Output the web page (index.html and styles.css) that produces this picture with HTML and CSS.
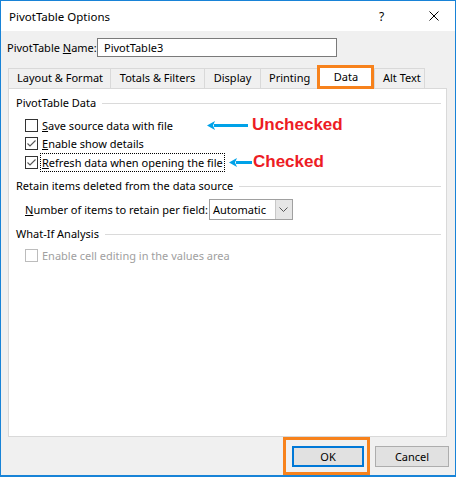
FILE: index.html
```html
<!DOCTYPE html>
<html>
<head>
<meta charset="utf-8">
<link rel="stylesheet" href="styles.css">
</head>
<body>
<div class="dialog">
  <div class="titlebar">
    <span class="title">PivotTable Options</span>
    <span class="help">?</span>
    <svg class="close" width="10" height="10" viewBox="0 0 10 10"><path d="M0.5 0.5 L9.5 9.5 M9.5 0.5 L0.5 9.5" stroke="#000" stroke-width="1" fill="none"/></svg>
  </div>
  <div class="body">
    <div class="name-row">
      <span class="name-label">PivotTable <u>N</u>ame:</span>
      <div class="name-input">PivotTable3</div>
    </div>
    <div class="tabs">
      <div class="tab t1">Layout &amp; Format</div>
      <div class="tab t2">Totals &amp; Filters</div>
      <div class="tab t3">Display</div>
      <div class="tab t4">Printing</div>
      <div class="tab active">Data</div>
      <div class="tab t6">Alt Text</div>
      <div class="hl hl-tab"></div>
    </div>
    <div class="panel">
      <div class="group">PivotTable Data</div>
      <div class="check-row r1"><span class="box"></span><span class="lbl"><u>S</u>ave source data with file</span></div>
      <div class="check-row"><span class="box"><svg width="11" height="11" viewBox="0 0 11 11"><path d="M1.5 5.5 L4 8 L9.5 2.5" stroke="#555" stroke-width="1.1" fill="none"/></svg></span><span class="lbl"><u>E</u>nable show details</span></div>
      <div class="check-row r3"><span class="box"><svg width="11" height="11" viewBox="0 0 11 11"><path d="M1.5 5.5 L4 8 L9.5 2.5" stroke="#555" stroke-width="1.1" fill="none"/></svg></span><span class="lbl focus"><u>R</u>efresh data when opening the file</span></div>
      <div class="group g2">Retain items deleted from the data source</div>
      <div class="num-row">
        <span class="lbl"><u>N</u>umber of items to retain per field:</span>
        <div class="select"><span class="sel-text">Automatic</span><span class="sel-btn"><svg width="9" height="5" viewBox="0 0 9 5"><path d="M0.5 0.5 L4.5 4.5 L8.5 0.5" stroke="#555" stroke-width="1" fill="none"/></svg></span></div>
      </div>
      <div class="group g3">What-If Analysis</div>
      <div class="check-row disabled"><span class="box"></span><span class="lbl">Enable cell editing in the values area</span></div>

      <svg class="arrow a1" width="41" height="9" viewBox="0 0 41 9"><path d="M7 4.5 H41" stroke="#00a2e8" stroke-width="3"/><path d="M0 4.5 L8 0 L6 4.5 L8 9 Z" fill="#00a2e8"/></svg>
      <span class="note n1">Unchecked</span>
      <svg class="arrow a2" width="23" height="9" viewBox="0 0 23 9"><path d="M7 4.5 H23" stroke="#00a2e8" stroke-width="3"/><path d="M0 4.5 L8 0 L6 4.5 L8 9 Z" fill="#00a2e8"/></svg>
      <span class="note n2">Checked</span>
    </div>
    <div class="buttons">
      <div class="btn ok">OK</div>
      <div class="btn">Cancel</div>
      <div class="hl hl-ok"></div>
    </div>
  </div>
</div>
</body>
</html>
```
FILE: styles.css
```css
* { box-sizing: border-box; }
html, body { margin: 0; padding: 0; background: #fff; }
body { font-family: "Noto Sans", "Open Sans", sans-serif; font-size: 11px; color: #000; }
.dialog {
  width: 456px; height: 477px;
  border: 1px solid #1883d7;
  border-bottom-width: 2px;
  background: #f0f0f0;
  display: flex; flex-direction: column;
}
.titlebar {
  height: 30px; background: #fff;
  display: flex; align-items: center;
  padding-left: 8px;
}
.title { font-size: 11.5px; flex: 1; }
.help { width: 12px; margin-right: 38px; font-size: 12px; }
.close { margin-right: 16px; }
.body { flex: 1; position: relative; padding: 7px 0 0 0; }
.name-row { display: flex; align-items: center; height: 19px; padding-left: 6px; }
.name-label { width: 90px; white-space: nowrap; }
.name-input {
  width: 240px; height: 19px; background: #fff;
  border: 1px solid #7a7a7a; padding: 0 6px; line-height: 17px;
}
.tabs { position: relative; display: flex; align-items: flex-end; height: 31px; margin-left: 7px; margin-top: 0; }
.tab {
  height: 20px; line-height: 18px; padding: 0 8px;
  border: 1px solid #d9d9d9; border-bottom: none; border-right: none;
  background: #f0f0f0; white-space: nowrap; text-align: center;
}
.t1 { width: 102px; }
.t2 { width: 94px; }
.t3 { width: 56px; }
.t4 { width: 57px; }
.tab.active { width: 57px; height: 24px; background: #fff; line-height: 22px; position: relative; z-index: 2; margin-bottom: -1px; }
.t6 { width: 51px; border-right: 1px solid #d9d9d9; }
.hl { position: absolute; border: 3px solid #f7821c; z-index: 3; }
.hl-tab { left: 309px; top: 8px; width: 57px; height: 24px; }
.panel {
  position: relative;
  margin-left: 7px; width: 439px; height: 349px;
  background: #fff; border: 1px solid #d9d9d9;
  padding: 6px 5px 0 7px;
}
.group { display: flex; align-items: center; height: 16px; line-height: 16px; white-space: nowrap; }
.group::after { content: ""; flex: 1; height: 1px; background: #dadada; margin-left: 6px; }
.g2 { margin-top: 7px; }
.g3 { margin-top: 6px; }
.check-row { display: flex; align-items: center; height: 18px; padding-left: 9px; }
.r1 { margin-top: 5px; }
.r3 { margin-top: 1px; }
.box {
  width: 13px; height: 13px; border: 1px solid #333; background: #fff;
  display: flex; align-items: center; justify-content: center; flex: none;
}
.lbl { margin-left: 4px; white-space: nowrap; }
.focus { outline: 1px dotted #000; outline-offset: 0; padding: 0 1px; line-height: 17px; margin-left: 3px; }
.disabled { margin-top: 4px; }
.disabled .box { border-color: #bcbcbc; }
.disabled .lbl { color: #a0a0a0; }
.num-row { display: flex; align-items: center; height: 21px; margin-top: 5px; padding-left: 9px; }
.num-row .lbl { margin-left: 0; margin-right: 1px; }
.select {
  width: 84px; height: 21px; background: #fff; border: 1px solid #a0a0a0;
  display: flex; align-items: center;
}
.sel-text { flex: 1; padding-left: 3px; }
.sel-btn { width: 17px; height: 19px; background: #e6e6e6; border-left: 1px solid #c8c8c8; display: flex; align-items: center; justify-content: center; }
.arrow { position: absolute; }
.a1 { left: 198px; top: 32px; }
.a2 { left: 220px; top: 69px; }
.note { position: absolute; font-family: "Liberation Sans", Arial, sans-serif; font-weight: bold; font-size: 17px; color: #ed1c24; line-height: 20px; }
.n1 { left: 243px; top: 26px; }
.n2 { left: 244px; top: 63px; }
.buttons { position: relative; display: flex; justify-content: flex-end; gap: 11px; padding-right: 6px; margin-top: 9px; }
.btn { width: 74px; height: 21px; background: #e1e1e1; border: 1px solid #adadad; text-align: center; line-height: 19px; }
.btn.ok { width: 72px; border: 2px solid #0078d7; line-height: 17px; }
.hl-ok { left: 282px; top: -9px; width: 87px; height: 38px; }
```
